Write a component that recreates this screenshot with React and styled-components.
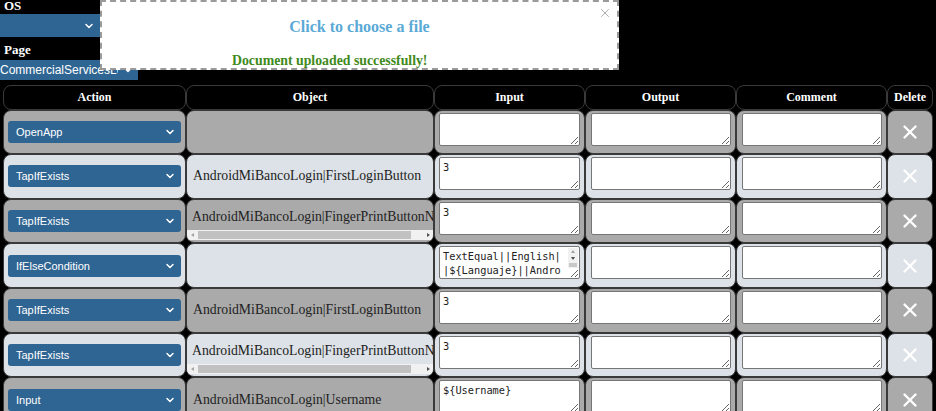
import React from 'react';
import styled, { createGlobalStyle } from 'styled-components';
import { X, ChevronDown } from 'lucide-react';

const GlobalStyle = createGlobalStyle`
  body {
    margin: 0;
    background: #000;
    font-family: "Liberation Serif", "Times New Roman", serif;
    overflow: hidden;
  }
`;

const Page = styled.div`
  width: 936px;
`;

const TopBar = styled.div`
  position: relative;
  display: flow-root;
  height: 85px;
`;

const FieldLabel = styled.div`
  color: #fff;
  font-weight: bold;
  font-size: 13px;
  line-height: 15px;
  padding-left: 4px;
  margin-top: ${(p) => p.$top || 0}px;
`;

const SelectWrap = styled.div`
  position: relative;
  width: ${(p) => (p.$width ? `${p.$width}px` : '100%')};
  margin-top: ${(p) => p.$top || 0}px;
`;

const Select = styled.select`
  appearance: none;
  display: block;
  width: 100%;
  height: ${(p) => p.$height || 22}px;
  border: none;
  border-radius: ${(p) => (p.$flat ? 0 : 3)}px;
  background: #2f6592;
  color: #fff;
  font-family: "Liberation Sans", Arial, sans-serif;
  font-size: ${(p) => p.$size || 11}px;
  padding: 0 20px 0 ${(p) => (p.$pad === undefined ? 8 : p.$pad)}px;
  outline: none;
`;

const Chevron = styled(ChevronDown)`
  position: absolute;
  right: ${(p) => p.$right || 6}px;
  top: 50%;
  transform: translateY(-50%);
  pointer-events: none;
`;

const UploadBox = styled.div`
  position: absolute;
  left: 100px;
  top: 0;
  width: 519px;
  height: 70px;
  box-sizing: border-box;
  background: #fff;
  border: 2px dashed #9a9a9a;
  display: flex;
  flex-direction: column;
`;

const UploadTitle = styled.div`
  color: #5aa9d6;
  font-weight: bold;
  font-size: 16px;
  text-align: center;
  margin-top: 16px;
`;

const UploadStatus = styled.div`
  color: #3f8a1c;
  font-weight: bold;
  font-size: 13.8px;
  margin-top: 17px;
  padding-left: 130px;
`;

const CloseIcon = styled(X)`
  position: absolute;
  top: 4px;
  right: 5px;
  color: #a0a0a0;
`;

const Table = styled.div`
  display: grid;
  grid-template-columns: 183px 248px 151px 151px 151px 46px;
  grid-template-rows: 24.5px;
  grid-auto-rows: 44.67px;
  margin-left: 3px;
`;

const Cell = styled.div`
  box-sizing: border-box;
  border: 1px solid #3a3a3a;
  border-radius: 8px;
  background: ${(p) => (p.$light ? '#dde2e8' : '#aaaaaa')};
  display: flex;
  flex-direction: ${(p) => (p.$column ? 'column' : 'row')};
  align-items: ${(p) => p.$align || 'center'};
  justify-content: ${(p) => p.$justify || 'flex-start'};
  padding: ${(p) => p.$pad || '0 4px'};
  min-width: 0;
  overflow: hidden;
`;

const HeadCell = styled(Cell)`
  background: #000;
  color: #fff;
  font-weight: bold;
  font-size: 12px;
  justify-content: center;
  padding: 0;
`;

const ObjectText = styled.div`
  font-size: 13.75px;
  color: #222;
  white-space: nowrap;
  padding-left: 1px;
`;

const ScrollLine = styled.div`
  flex: 1;
  display: flex;
  align-items: center;
  padding: 3px 5px 0;
  font-size: 13.75px;
  color: #222;
  white-space: nowrap;
  overflow: hidden;
`;

const HBar = styled.div`
  display: flex;
  height: 10px;
  margin-bottom: 2px;
  background: #f1f1f1;
`;

const BarButton = styled.div`
  width: 10px;
  display: flex;
  align-items: center;
  justify-content: center;
  flex-shrink: 0;
`;

const Arrow = styled.span`
  width: 0;
  height: 0;
  border: 2px solid transparent;
  ${(p) => p.$dir === 'left' && 'border-right: 3px solid #a3a3a3; border-left-width: 0;'}
  ${(p) => p.$dir === 'right' && 'border-left: 3px solid #505050; border-right-width: 0;'}
  ${(p) => p.$dir === 'up' && 'border-bottom: 3px solid #a3a3a3; border-top-width: 0;'}
  ${(p) => p.$dir === 'down' && 'border-top: 3px solid #505050; border-bottom-width: 0;'}
`;

const HThumb = styled.div`
  flex: 1;
  margin: 1px 12px 1px 1px;
  background: #c1c1c1;
`;

const AreaWrap = styled.div`
  position: relative;
  width: 100%;
  height: 33px;
  margin-top: 2px;
`;

const Area = styled.textarea`
  box-sizing: border-box;
  display: block;
  width: 100%;
  height: 33px;
  margin: 0;
  border: 1px solid #767676;
  border-radius: 2px;
  background: #fff;
  padding: 2px ${(p) => (p.$scroll ? 15 : 3)}px 2px 3px;
  font-family: "DejaVu Sans Mono", "Liberation Mono", monospace;
  font-size: 10.3px;
  line-height: 14px;
  color: #222;
  outline: none;
  overflow: hidden;
  word-break: break-all;
`;

const VBar = styled.div`
  position: absolute;
  top: 2px;
  right: 2px;
  width: 10px;
  height: 20px;
  background: #f1f1f1;
  display: flex;
  flex-direction: column;
`;

const VButton = styled.div`
  height: 7px;
  display: flex;
  align-items: center;
  justify-content: center;
`;

const VThumb = styled.div`
  flex: 1;
  margin: 1px;
  background: #c8c8c8;
`;

const rows = [
  { action: 'OpenApp', object: '', input: '' },
  { action: 'TapIfExists', object: 'AndroidMiBancoLogin|FirstLoginButton', input: '3' },
  { action: 'TapIfExists', object: 'AndroidMiBancoLogin|FingerPrintButtonNo', input: '3', scroll: true },
  { action: 'IfElseCondition', object: '', input: 'TextEqual||English||${Languaje}||AndroidMiBancoLogin|LanguageLabel', areaScroll: true },
  { action: 'TapIfExists', object: 'AndroidMiBancoLogin|FirstLoginButton', input: '3' },
  { action: 'TapIfExists', object: 'AndroidMiBancoLogin|FingerPrintButtonNo', input: '3', scroll: true },
  { action: 'Input', object: 'AndroidMiBancoLogin|Username', input: '${Username}' },
];

const headers = ['Action', 'Object', 'Input', 'Output', 'Comment', 'Delete'];

function TextBox({ value, scroll }) {
  return (
    <AreaWrap>
      <Area defaultValue={value} $scroll={scroll} />
      {scroll && (
        <VBar>
          <VButton><Arrow $dir="up" /></VButton>
          <VButton><Arrow $dir="down" /></VButton>
          <VThumb />
        </VBar>
      )}
    </AreaWrap>
  );
}

function StepRow({ row, light }) {
  return (
    <>
      <Cell $light={light}>
        <SelectWrap>
          <Select value={row.action} onChange={() => {}}>
            <option>{row.action}</option>
          </Select>
          <Chevron size={12} strokeWidth={3} color="#fff" $right={5} />
        </SelectWrap>
      </Cell>
      {row.scroll ? (
        <Cell $light={light} $pad="0" $column $align="stretch">
          <ScrollLine>{row.object}</ScrollLine>
          <HBar>
            <BarButton><Arrow $dir="left" /></BarButton>
            <HThumb />
            <BarButton><Arrow $dir="right" /></BarButton>
          </HBar>
        </Cell>
      ) : (
        <Cell $light={light} $pad="0 5px">
          <ObjectText>{row.object}</ObjectText>
        </Cell>
      )}
      <Cell $light={light} $align="flex-start">
        <TextBox value={row.input} scroll={row.areaScroll} />
      </Cell>
      <Cell $light={light} $align="flex-start" $pad="0 4px 0 5px">
        <TextBox />
      </Cell>
      <Cell $light={light} $align="flex-start" $pad="0 4px 0 5px">
        <TextBox />
      </Cell>
      <Cell $light={light} $justify="center" $pad="0">
        <X size={22} strokeWidth={2.6} color="#fff" />
      </Cell>
    </>
  );
}

export default function App() {
  return (
    <Page>
      <GlobalStyle />
      <TopBar>
        <FieldLabel $top={-2}>OS</FieldLabel>
        <SelectWrap $width={100} $top={1}>
          <Select $height={23} $flat value="" onChange={() => {}}>
            <option value=""></option>
          </Select>
          <Chevron size={12} strokeWidth={3} color="#fff" $right={5} />
        </SelectWrap>
        <FieldLabel $top={5}>Page</FieldLabel>
        <SelectWrap $width={138} $top={3}>
          <Select $height={20} $flat $pad={0} $size={12} value="p" onChange={() => {}}>
            <option value="p">CommercialServicesLogin</option>
          </Select>
          <Chevron size={12} strokeWidth={3} color="#fff" $right={4} />
        </SelectWrap>
        <UploadBox>
          <UploadTitle>Click to choose a file</UploadTitle>
          <UploadStatus>Document uploaded successfully!</UploadStatus>
          <CloseIcon size={14} strokeWidth={1.5} />
        </UploadBox>
      </TopBar>
      <Table>
        {headers.map((h) => (
          <HeadCell key={h}>{h}</HeadCell>
        ))}
        {rows.map((row, i) => (
          <StepRow key={i} row={row} light={i % 2 === 1} />
        ))}
      </Table>
    </Page>
  );
}
